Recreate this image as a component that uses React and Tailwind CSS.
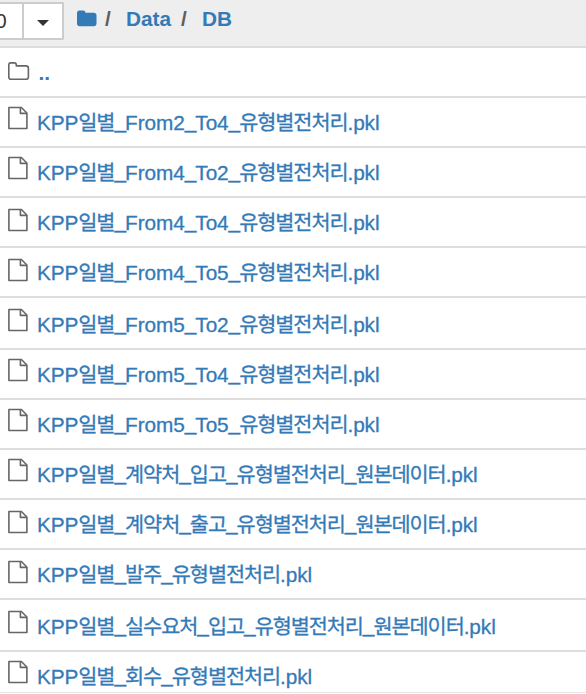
import React from "react";

const rows = [
  { name: "KPP일별_From2_To4_유형별전처리.pkl", height: "h-[50px] border-b-2 border-[#ddd]", icon: "mt-[8px]", text: "mt-[12px]" },
  { name: "KPP일별_From4_To2_유형별전처리.pkl", height: "h-[50px] border-b-2 border-[#ddd]", icon: "mt-[8px]", text: "mt-[12px]" },
  { name: "KPP일별_From4_To4_유형별전처리.pkl", height: "h-[50px] border-b-2 border-[#ddd]", icon: "mt-[10px]", text: "mt-[12px]" },
  { name: "KPP일별_From4_To5_유형별전처리.pkl", height: "h-[50px] border-b-2 border-[#ddd]", icon: "mt-[10px]", text: "mt-[12px]" },
  { name: "KPP일별_From5_To2_유형별전처리.pkl", height: "h-[52px] border-b-2 border-[#ddd]", icon: "mt-[10px]", text: "mt-[14px]" },
  { name: "KPP일별_From5_To4_유형별전처리.pkl", height: "h-[50px] border-b-2 border-[#ddd]", icon: "mt-[8px]", text: "mt-[12px]" },
  { name: "KPP일별_From5_To5_유형별전처리.pkl", height: "h-[50px] border-b-2 border-[#ddd]", icon: "mt-[8px]", text: "mt-[12px]" },
  { name: "KPP일별_계약처_입고_유형별전처리_원본데이터.pkl", height: "h-[50px] border-b-2 border-[#ddd]", icon: "mt-[8px]", text: "mt-[12px]" },
  { name: "KPP일별_계약처_출고_유형별전처리_원본데이터.pkl", height: "h-[50px] border-b-2 border-[#ddd]", icon: "mt-[10px]", text: "mt-[12px]" },
  { name: "KPP일별_발주_유형별전처리.pkl", height: "h-[50px] border-b-2 border-[#ddd]", icon: "mt-[10px]", text: "mt-[12px]" },
  { name: "KPP일별_실수요처_입고_유형별전처리_원본데이터.pkl", height: "h-[52px] border-b-2 border-[#ddd]", icon: "mt-[10px]", text: "mt-[14px]" },
  { name: "KPP일별_회수_유형별전처리.pkl", height: "h-[41px] border-b border-[#e7e7e7]", icon: "mt-[8px]", text: "mt-[12px]" },
];

// Hangul runs and underscores are set tighter than the Latin ones.
function FileName({ name }) {
  return name.split(/([가-힣]+|_)/).map((part, i) => {
    if (part === "_") {
      return <span key={i} className="align-[2px] leading-none tracking-[-0.9px]">{part}</span>;
    }
    if (/[가-힣]/.test(part)) {
      return <span key={i} className="tracking-[-1.1px]">{part}</span>;
    }
    return <span key={i} className="tracking-[-0.1px]">{part}</span>;
  });
}

function FileIcon({ className }) {
  return (
    <svg className={"block shrink-0 " + className} width="20" height="24" viewBox="0 0 20 24" fill="none" stroke="#666" strokeWidth="1.6" strokeLinejoin="round">
      <path d="M.9 1.5H13.4L18.9 7V22.5H.9Z" />
      <path d="M12.4 1.5V7.4H18.9" />
    </svg>
  );
}

export default function App() {
  return (
    <div className="h-[694px] w-[586px] overflow-hidden bg-white font-['Liberation_Sans','Noto_Sans_CJK_KR',sans-serif] text-[20.8px] leading-[26px] text-[#337ab7]">
      <header className="flex h-[48px] items-start border-b-2 border-[#ddd] bg-[#eee]">
        <div className="mt-[2px] flex h-[38px] w-[64px] shrink-0 overflow-hidden rounded-r-[2px] border-2 border-l-0 border-[#ccc] bg-white text-[#333]">
          <div className="flex w-[24px] shrink-0 items-center justify-end border-r-2 border-[#ccc] pr-[15.5px] text-[20px]">0</div>
          <div className="flex flex-1 items-center justify-center">
            <svg width="12" height="6" viewBox="0 0 12 6" className="mt-[4px] block">
              <path d="M0 0H12L6 6Z" fill="#333" />
            </svg>
          </div>
        </div>
        <nav className="flex font-bold">
          <svg width="20" height="17" viewBox="0 0 20 17" className="ml-[13px] mt-[9.5px] block">
            <path d="M0 3C0 1.4 1 .5 2.5.5H6C7.5.5 8.4 1.4 8.4 2.8H16.8C18.5 2.8 19.5 3.8 19.5 5.4V13.6C19.5 15.2 18.5 16.2 16.8 16.2H2.6C1 16.2 0 15.2 0 13.6Z" fill="#337ab7" />
          </svg>
          <span className="ml-[8px] mt-[6px] w-[21px] text-[#5e5e5e]">/</span>
          <a className="mt-[6px] w-[55px]">Data</a>
          <span className="mt-[6px] w-[21px] text-[#5e5e5e]">/</span>
          <a className="mt-[6px]">DB</a>
        </nav>
      </header>
      <main>
        <div className="flex h-[50px] border-b-2 border-[#ddd]">
          <svg width="22" height="19" viewBox="0 0 22 19" className="ml-[8px] mt-[14px] block" fill="none" stroke="#666" strokeWidth="1.6" strokeLinejoin="round">
            <path d="M.8 3C.8 1.6 1.5.9 2.8.9H6.4C7.7.9 8.3 1.6 8.3 3V3.9H17.9C19.5 3.9 20.4 4.8 20.4 6.2V15C20.4 16.5 19.5 17.3 18 17.3H3.1C1.6 17.3.8 16.5.8 15Z" />
          </svg>
          <a className="ml-[8.5px] mt-[12px] font-bold">..</a>
        </div>
        {rows.map((row) => (
          <div key={row.name} className={"flex pl-[8px] " + row.height}>
            <FileIcon className={row.icon} />
            <a className={"ml-[9px] whitespace-nowrap [-webkit-text-stroke:0.3px_#337ab7] " + row.text}>
              <FileName name={row.name} />
            </a>
          </div>
        ))}
      </main>
    </div>
  );
}
